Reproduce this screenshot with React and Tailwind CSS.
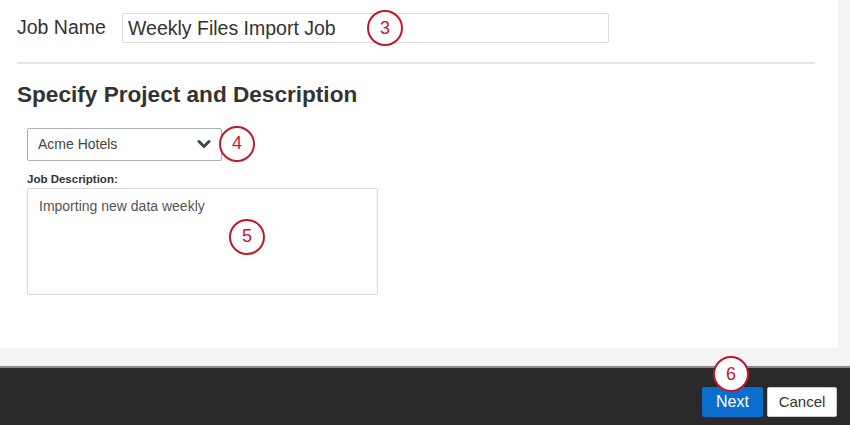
import React from 'react';

const Marker = ({ n, className }) => (
  <span
    className={`absolute flex h-[36px] w-[36px] items-center justify-center rounded-full border-[2.5px] border-[#c3182c] bg-white text-[18px] text-[#c3182c] ${className}`}
  >
    {n}
  </span>
);

const Chevron = () => (
  <svg width="14" height="10" viewBox="0 0 14 10" className="text-[#3c4a57]">
    <path d="M2 2.5 L7 7.5 L12 2.5" fill="none" stroke="currentColor" strokeWidth="3" strokeLinecap="round" strokeLinejoin="round" />
  </svg>
);

const App = () => {
  return (
    <div className="relative flex h-[425px] w-[850px] flex-col overflow-hidden bg-[#f4f4f6] font-['Liberation_Sans',Arial,sans-serif] text-[#333]">
      <div className="flex h-[348px] w-[838px] flex-col bg-white">
        <div className="relative flex items-center pl-[17px] pt-[13px]">
          <label className="w-[105px] text-[19.5px] leading-none">Job Name</label>
          <input
            type="text"
            defaultValue="Weekly Files Import Job"
            className="h-[30px] w-[487px] rounded-[2px] border border-[#dcdcdc] px-[5px] text-[19.5px] text-[#333] outline-none"
          />
          <Marker n="3" className="left-[367px] top-[10px]" />
        </div>

        <div className="ml-[17px] mt-[19px] h-[2px] w-[798px] bg-[#e6e6e6]" />

        <h2 className="ml-[17px] mt-[20px] text-[22.6px] font-bold leading-none">Specify Project and Description</h2>

        <div className="relative ml-[27px] mt-[21px]">
          <div className="flex h-[33px] w-[195px] items-center justify-between rounded-[2px] border border-[#a9b0b7] px-[10px] text-[14px] text-[#444]">
            <span>Acme Hotels</span>
            <Chevron />
          </div>
          <Marker n="4" className="left-[192px] top-[-2px]" />

          <div className="mt-[13px] text-[11.5px] font-bold leading-none text-[#333]">Job Description:</div>

          <div className="relative mt-[3px] h-[107px] w-[351px] rounded-[2px] border border-[#d9d9d9] px-[11px] pt-[7px] text-[14px] text-[#555]">
            Importing new data weekly
          </div>
          <Marker n="5" className="left-[202px] top-[91px]" />
        </div>
      </div>

      <div className="flex-1" />

      <div className="relative flex h-[59px] items-start justify-end gap-[4px] border-t-2 border-[#8a8a8a] bg-[#2a2a2a] pr-[13px] pt-[19px]">
        <button className="h-[30px] w-[61px] rounded-[2px] bg-[#0b6ecf] text-[16px] text-white">Next</button>
        <button className="h-[30px] w-[70px] rounded-[2px] border border-[#ccc] bg-white text-[15px] text-[#333]">Cancel</button>
        <Marker n="6" className="left-[713px] top-[-12px]" />
      </div>
    </div>
  );
};

export default App;
